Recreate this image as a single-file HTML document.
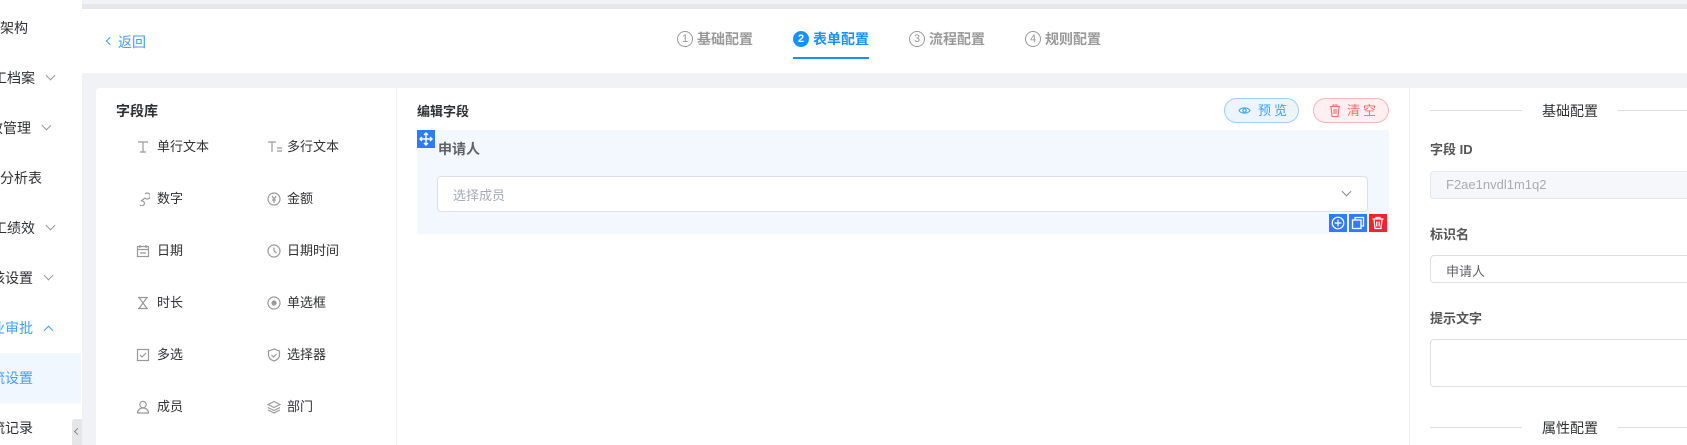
<!DOCTYPE html>
<html><head><meta charset="utf-8"><style>
*{margin:0;padding:0;box-sizing:border-box}
body{width:1687px;height:445px;overflow:hidden;background:#f0f2f5;font-family:"Liberation Sans","Noto Sans CJK SC",sans-serif;position:relative;color:#303133}
.a{position:absolute}
.side{left:0;top:0;width:82px;height:445px;background:#fff;overflow:hidden}
.side div{position:absolute;left:0;font-size:14px;color:#303133;white-space:nowrap;line-height:20px}
.chev{display:inline-block;width:7px;height:7px;border-right:1px solid #999;border-bottom:1px solid #999;transform:rotate(45deg);margin-left:12px;position:relative;top:-4px}
.lib{font-size:13px;color:#303133;line-height:18px;white-space:nowrap}
.lbl{font-size:13px;font-weight:bold;color:#555}
.inp{border:1px solid #dcdfe6;border-radius:4px;background:#fff}
.step{font-size:14px;color:#999;font-weight:bold;line-height:20px;white-space:nowrap;display:flex;align-items:center}
.circ{display:inline-block;width:16px;height:16px;border:1.3px solid #999;border-radius:50%;font-size:11px;text-align:center;line-height:14px;margin-right:4px;font-weight:normal}
</style></head><body>
<div class="a" style="left:82px;top:4px;width:1605px;height:5px;background:#e6e7ea"></div>
<div class="a" style="left:82px;top:9px;width:1605px;height:64px;background:#fff"></div>
<div class="a side">
<div style="top:18px">架构</div>
<div style="top:68px;left:-7px">工档案<span class="chev"></span></div>
<div style="top:118px;left:-11px">效管理<span class="chev"></span></div>
<div style="top:168px">分析表</div>
<div style="top:218px;left:-7px">工绩效<span class="chev"></span></div>
<div style="top:268px;left:-9px">核设置<span class="chev"></span></div>
<div style="top:318px;left:-9px;color:#409eff">业审批<span class="chev" style="transform:rotate(225deg);top:1px;border-color:#409eff"></span></div>
<div style="top:353px;width:81px;height:50px;background:#f0f7ff"></div>
<div style="top:368px;left:-9px;color:#409eff">流设置</div>
<div style="top:418px;left:-9px">流记录</div>
</div>
<div class="a" style="left:72px;top:419px;width:10px;height:26px;background:#e4e6ea;border-radius:3px 0 0 0"></div>
<div class="a" style="left:75px;top:429px;width:5px;height:5px;border-left:1px solid #888;border-bottom:1px solid #888;transform:rotate(45deg)"></div>
<div class="a" style="left:107px;top:38px;width:6px;height:6px;border-left:1px solid #409eff;border-bottom:1px solid #409eff;transform:rotate(45deg)"></div>
<div class="a" style="left:118px;top:32px;font-size:14px;color:#409eff">返回</div>
<div class="a step" style="left:677px;top:29px"><span class="circ">1</span>基础配置</div>
<div class="a step" style="left:793px;top:29px;color:#1890ff"><span class="circ" style="background:#1890ff;border-color:#1890ff;color:#fff;font-weight:bold">2</span>表单配置</div>
<div class="a" style="left:793px;top:57px;width:76px;height:2px;background:#1890ff"></div>
<div class="a step" style="left:909px;top:29px"><span class="circ">3</span>流程配置</div>
<div class="a step" style="left:1025px;top:29px"><span class="circ">4</span>规则配置</div>

<div class="a" style="left:96px;top:88px;width:1591px;height:357px;background:#fff;border-radius:4px 0 0 0"></div>
<div class="a" style="left:396px;top:88px;width:1px;height:357px;background:#eee"></div>
<div class="a" style="left:1409px;top:88px;width:1px;height:357px;background:#eee"></div>

<div class="a" style="left:116px;top:101px;font-size:14px;font-weight:bold">字段库</div>
<div class="a lib" style="left:157px;top:138px">单行文本</div>
<svg class="a" style="left:136px;top:140px" width="14" height="14" fill="none" stroke="#999" stroke-width="1.2"><path d="M2 2h10M7 2v10M4 12h6"/></svg>
<div class="a lib" style="left:287px;top:138px">多行文本</div>
<svg class="a" style="left:267px;top:140px" width="16" height="14" fill="none" stroke="#999" stroke-width="1.2"><path d="M1 2h8M5 2v10M10 8h5M10 11h5"/></svg>
<div class="a lib" style="left:157px;top:190px">数字</div>
<svg class="a" style="left:136px;top:192px" width="14" height="14" fill="none" stroke="#999" stroke-width="1.2"><path d="M9 2a3 3 0 1 1 0 4L5 9a2.5 2.5 0 1 1-1 4"/></svg>
<div class="a lib" style="left:287px;top:190px">金额</div>
<svg class="a" style="left:267px;top:192px" width="14" height="14" fill="none" stroke="#999" stroke-width="1.2"><circle cx="7" cy="7" r="6"/><path d="M5 4l2 3 2-3M7 7v4M5 8h4"/></svg>
<div class="a lib" style="left:157px;top:242px">日期</div>
<svg class="a" style="left:136px;top:244px" width="14" height="14" fill="none" stroke="#999" stroke-width="1.2"><rect x="1.5" y="2.5" width="11" height="10"/><path d="M1.5 5.5h11M4 1v3M10 1v3M4 9h6"/></svg>
<div class="a lib" style="left:287px;top:242px">日期时间</div>
<svg class="a" style="left:267px;top:244px" width="14" height="14" fill="none" stroke="#999" stroke-width="1.2"><circle cx="7" cy="7" r="6"/><path d="M7 3.5V7l2.5 2"/></svg>
<div class="a lib" style="left:157px;top:294px">时长</div>
<svg class="a" style="left:136px;top:296px" width="14" height="14" fill="none" stroke="#999" stroke-width="1.2"><path d="M2 1.5h10M2 12.5h10M3 1.5l4 5.5-4 5.5M11 1.5L7 7l4 5.5"/></svg>
<div class="a lib" style="left:287px;top:294px">单选框</div>
<svg class="a" style="left:267px;top:296px" width="14" height="14" fill="none" stroke="#999" stroke-width="1.2"><circle cx="7" cy="7" r="6"/><circle cx="7" cy="7" r="2" fill="#999"/></svg>
<div class="a lib" style="left:157px;top:346px">多选</div>
<svg class="a" style="left:136px;top:348px" width="14" height="14" fill="none" stroke="#999" stroke-width="1.2"><rect x="1.5" y="1.5" width="11" height="11"/><path d="M4 7l2 2 4-4"/></svg>
<div class="a lib" style="left:287px;top:346px">选择器</div>
<svg class="a" style="left:267px;top:348px" width="14" height="14" fill="none" stroke="#999" stroke-width="1.2"><path d="M7 1l5.5 2v4c0 3-2.5 5-5.5 6-3-1-5.5-3-5.5-6V3z"/><path d="M4.5 7l2 2 3-3"/></svg>
<div class="a lib" style="left:157px;top:398px">成员</div>
<svg class="a" style="left:136px;top:400px" width="14" height="14" fill="none" stroke="#999" stroke-width="1.2"><circle cx="7" cy="4.5" r="3.2"/><path d="M1.5 13c0-3 2.5-5 5.5-5s5.5 2 5.5 5z"/></svg>
<div class="a lib" style="left:287px;top:398px">部门</div>
<svg class="a" style="left:267px;top:400px" width="14" height="14" fill="none" stroke="#999" stroke-width="1.2"><path d="M7 1.5l6 3-6 3-6-3z"/><path d="M1 7.5l6 3 6-3M1 10l6 3 6-3"/></svg>

<div class="a" style="left:417px;top:101px;font-size:13px;font-weight:bold">编辑字段</div>
<div class="a" style="left:1224px;top:98px;width:75px;height:25px;border:1px solid #a0cfff;background:#ecf5ff;border-radius:13px;color:#409eff;font-size:13px;line-height:23px;letter-spacing:3px;padding-left:33px">预览</div>
<svg class="a" style="left:1238px;top:105px" width="13" height="11" fill="none" stroke="#409eff" stroke-width="1.1"><path d="M1 5.5C3 2 10 2 12 5.5 10 9 3 9 1 5.5z"/><circle cx="6.5" cy="5.5" r="1.7"/></svg>
<div class="a" style="left:1313px;top:98px;width:76px;height:25px;border:1px solid #fab6b6;background:#fef0f0;border-radius:13px;color:#f56c6c;font-size:13px;line-height:23px;letter-spacing:3px;padding-left:33px">清空</div>
<svg class="a" style="left:1329px;top:104px" width="12" height="13" fill="none" stroke="#f56c6c" stroke-width="1.1"><path d="M1 2.5h10M4 2.5V1h4v1.5M2 2.5l1 10h6l1-10M5 5v5M7 5v5"/></svg>

<div class="a" style="left:417px;top:130px;width:972px;height:104px;background:#f3f8fe"></div>
<div class="a" style="left:417px;top:130px;width:18px;height:18px;background:#2f7bff"></div>
<svg class="a" style="left:419px;top:132px" width="14" height="14" fill="none" stroke="#fff" stroke-width="1.4"><path d="M7 1v12M1 7h12M5 3l2-2 2 2M5 11l2 2 2-2M3 5L1 7l2 2M11 5l2 2-2 2"/></svg>
<div class="a" style="left:438px;top:139px;font-size:14px;font-weight:bold;color:#606266">申请人</div>
<div class="a inp" style="left:437px;top:176px;width:931px;height:36px"></div>
<div class="a" style="left:453px;top:185px;font-size:13px;color:#a8abb2">选择成员</div>
<div class="a" style="left:1343px;top:188px;width:7px;height:7px;border-right:1px solid #888;border-bottom:1px solid #888;transform:rotate(45deg)"></div>
<div class="a" style="left:1329px;top:214px;width:18px;height:18px;background:#2f7bff"></div>
<svg class="a" style="left:1331px;top:216px" width="14" height="14" fill="none" stroke="#fff" stroke-width="1.2"><circle cx="7" cy="7" r="5.8"/><path d="M7 3.5v7M3.5 7h7"/></svg>
<div class="a" style="left:1349px;top:214px;width:18px;height:18px;background:#2f7bff"></div>
<svg class="a" style="left:1351px;top:216px" width="14" height="14" fill="none" stroke="#fff" stroke-width="1.3"><rect x="1.5" y="4" width="8.5" height="8.5"/><path d="M4 4V1.5h8.5V10H10"/></svg>
<div class="a" style="left:1369px;top:214px;width:18px;height:18px;background:#f5222d"></div>
<svg class="a" style="left:1371px;top:216px" width="14" height="14" fill="none" stroke="#fff" stroke-width="1.3"><path d="M1.5 3h11M5 3V1.5h4V3M3 3l1 9.5h6L11 3M5.8 5.5v5M8.2 5.5v5"/></svg>

<div class="a" style="left:1430px;top:110px;width:92px;height:1px;background:#dcdfe6"></div>
<div class="a" style="left:1542px;top:101px;font-size:14px;color:#303133">基础配置</div>
<div class="a" style="left:1618px;top:110px;width:69px;height:1px;background:#dcdfe6"></div>
<div class="a lbl" style="left:1430px;top:139px">字段 ID</div>
<div class="a inp" style="left:1430px;top:171px;width:280px;height:28px;background:#f5f7fa;border-color:#e4e7ed"></div>
<div class="a" style="left:1446px;top:177px;font-size:13px;color:#a8abb2">F2ae1nvdl1m1q2</div>
<div class="a lbl" style="left:1430px;top:224px">标识名</div>
<div class="a inp" style="left:1430px;top:255px;width:280px;height:28px"></div>
<div class="a" style="left:1446px;top:261px;font-size:13px;color:#606266">申请人</div>
<div class="a lbl" style="left:1430px;top:308px">提示文字</div>
<div class="a inp" style="left:1430px;top:339px;width:280px;height:48px"></div>
<div class="a" style="left:1430px;top:427px;width:92px;height:1px;background:#dcdfe6"></div>
<div class="a" style="left:1542px;top:418px;font-size:14px;color:#303133">属性配置</div>
<div class="a" style="left:1618px;top:427px;width:69px;height:1px;background:#dcdfe6"></div>
</body></html>
